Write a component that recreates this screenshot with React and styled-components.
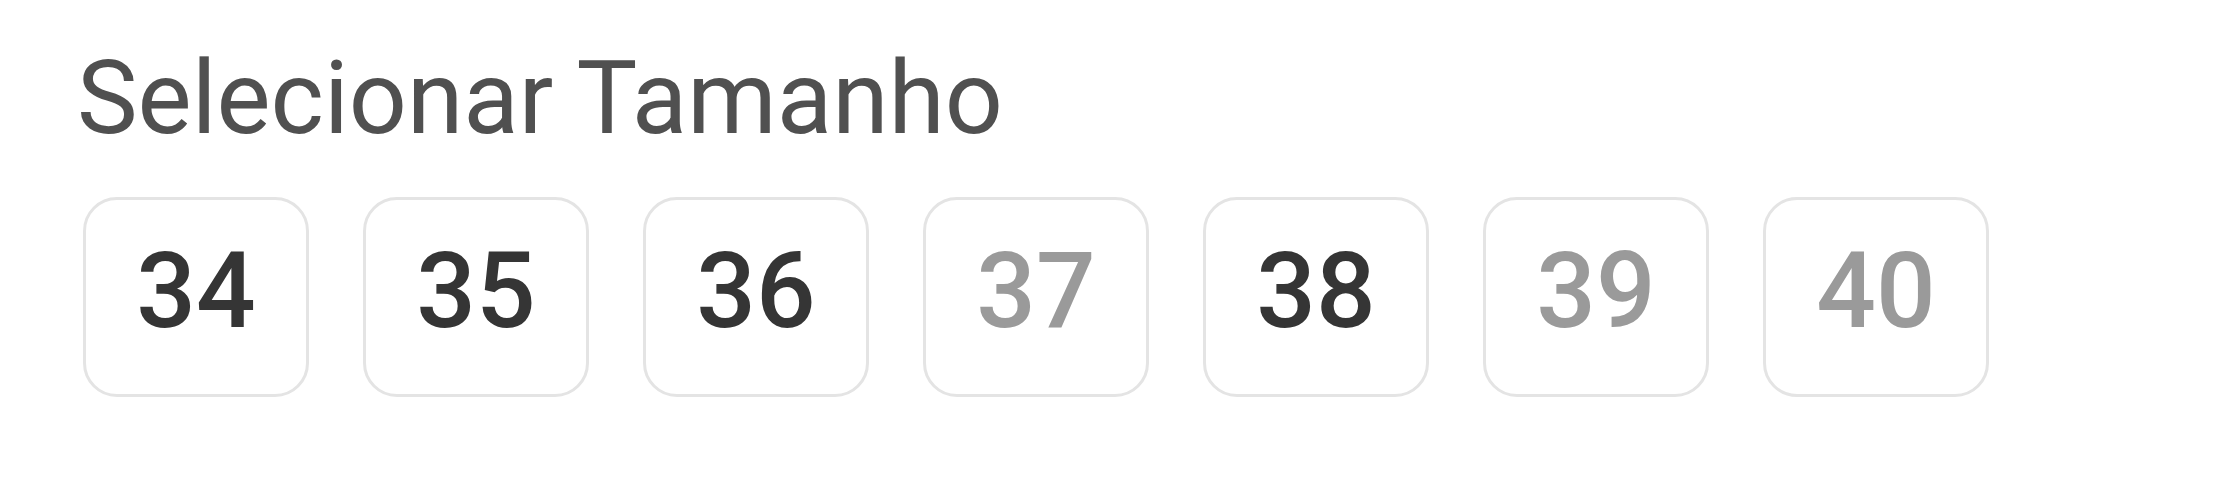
import React from "react";
import styled, { createGlobalStyle } from "styled-components";

const GlobalStyle = createGlobalStyle`
  body {
    margin: 0;
    background: #ffffff;
    font-family: Roboto, "Liberation Sans", sans-serif;
  }
`;

const Wrapper = styled.div`
  padding: 38px 0 0 77px;
`;

const Title = styled.div`
  font-size: 102px;
  line-height: 120px;
  color: #505050;
  margin-bottom: 39px;
`;

const SizeList = styled.div`
  display: flex;
  gap: 54px;
  padding-left: 6px;
`;

const SizeButton = styled.button`
  box-sizing: border-box;
  width: 226px;
  height: 200px;
  border: 3px solid #e4e4e4;
  border-radius: 34px;
  background: #ffffff;
  display: flex;
  justify-content: center;
  align-items: center;
  padding: 0 0 12px 0;
  font-family: Roboto, "Liberation Sans", sans-serif;
  font-size: 105px;
  font-weight: 500;
  line-height: 1;
  color: ${(p) => (p.disabled ? "#9a9a9a" : "#353535")};
  cursor: ${(p) => (p.disabled ? "default" : "pointer")};
`;

const sizes = [
  { n: 34, available: true },
  { n: 35, available: true },
  { n: 36, available: true },
  { n: 37, available: false },
  { n: 38, available: true },
  { n: 39, available: false },
  { n: 40, available: false },
];

const App = () => {
  return (
    <>
      <GlobalStyle />
      <Wrapper>
        <Title>Selecionar Tamanho</Title>
        <SizeList>
          {sizes.map((s) => (
            <SizeButton key={s.n} disabled={!s.available}>
              {s.n}
            </SizeButton>
          ))}
        </SizeList>
      </Wrapper>
    </>
  );
};

export default App;
